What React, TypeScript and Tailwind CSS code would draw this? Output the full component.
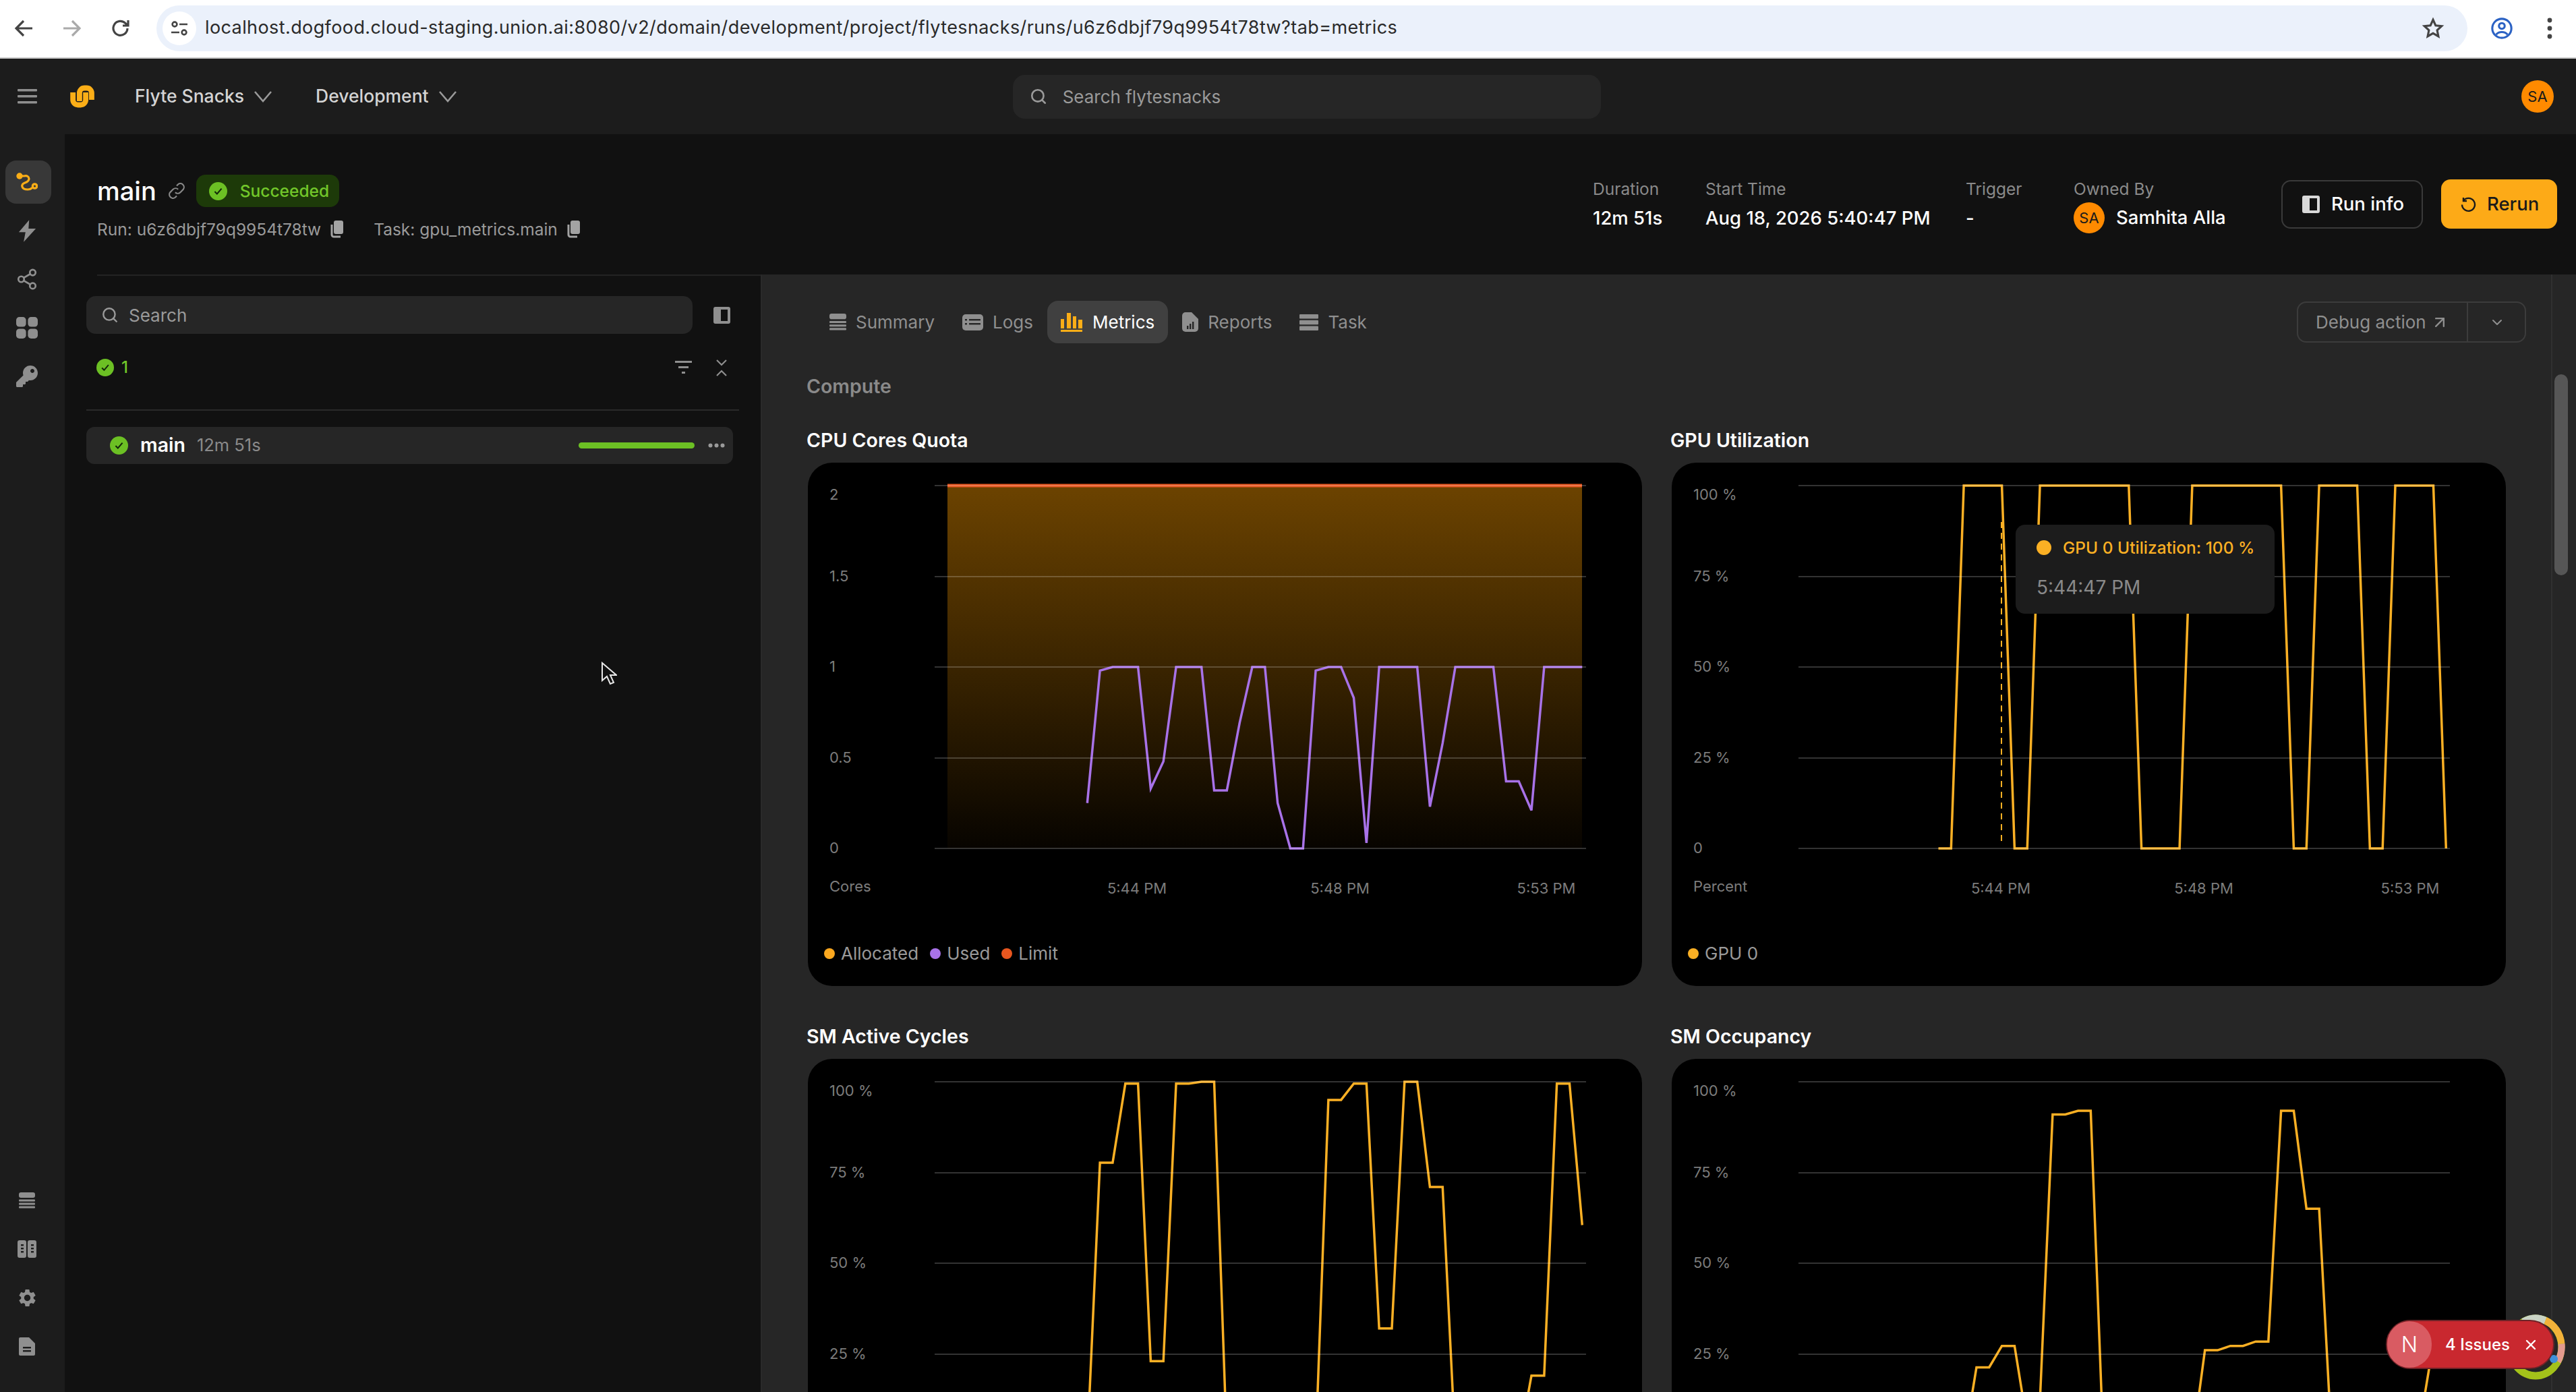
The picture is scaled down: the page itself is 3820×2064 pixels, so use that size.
import { ArrowUpRight, ChevronDown, Search, Share2, X } from "lucide-react";
import { FaKey } from "react-icons/fa";
import { MdSettings } from "react-icons/md";

const CheckCircle = ({ size = 27 }: { size?: number }) => (
  <svg width={size} height={size} viewBox="0 0 24 24" className="shrink-0">
    <circle cx="12" cy="12" r="12" fill="#6cc024" />
    <path d="M7.5 12.5l3 3 6-7" fill="none" stroke="#12260a" strokeWidth="1.8" />
  </svg>
);

const CopyIcon = () => (
  <svg width="20" height="26" viewBox="0 0 20 26" className="shrink-0" fill="#a3a3a3">
    <rect x="6" y="0" width="14" height="20" rx="3" />
    <path d="M3 6v15a3 3 0 0 0 3 3h10" fill="none" stroke="#a3a3a3" strokeWidth="3" />
  </svg>
);

const NavChevron = () => (
  <svg width="28" height="18" viewBox="0 0 28 18" fill="none" stroke="#9a9a9a" strokeWidth="2.6" className="ml-[14px]">
    <path d="M2 2l12 14L26 2" />
  </svg>
);

const RouteIcon = () => (
  <svg width="32" height="28" viewBox="0 0 32 28" fill="none" stroke="#fbae17" strokeWidth="3.2">
    <circle cx="5" cy="5" r="4.7" fill="#fbae17" stroke="none" />
    <path d="M5 5h7c4-1 7 1 7 4s-3 5-6 6c-3 1-5 3-4 6s4 4 8 4c3 0 5-1 6-2" strokeLinecap="round" />
    <circle cx="27.500" cy="20" r="3.200" />
  </svg>
);

const BoltIcon = () => (
  <svg width="27" height="33" viewBox="0 0 30 36" fill="#8f8f8f">
    <path d="M18 0L1 20h11L9 36l20-22H17z" />
  </svg>
);

const TilesIcon = () => (
  <svg width="32" height="32" viewBox="0 0 34 34" fill="#8f8f8f">
    <rect x="0" y="0" width="15.5" height="15.5" rx="5" />
    <rect x="18.5" y="0" width="15.5" height="15.5" rx="5" />
    <rect x="0" y="18.5" width="15.5" height="15.5" rx="5" />
    <rect x="18.5" y="18.5" width="15.5" height="15.5" rx="5" />
  </svg>
);

const RowsIcon = ({ color = "#8f8f8f", w = 24 }: { color?: string; w?: number }) => (
  <svg width={w} height={w} viewBox="0 0 24 24" fill={color}>
    <rect x="0" y="0" width="24" height="8" rx="3" />
    <rect x="0" y="10.5" width="24" height="3" rx="1" />
    <rect x="0" y="15.5" width="24" height="3" rx="1" />
    <rect x="0" y="20.5" width="24" height="3" rx="1" />
  </svg>
);

const ColumnsIcon = () => (
  <svg width="28" height="26" viewBox="0 0 28 26" fill="#8f8f8f">
    <rect x="0" y="0" width="13" height="26" rx="3" />
    <rect x="15" y="0" width="13" height="26" rx="3" />
    <g fill="#1c1c1c">
      <rect x="5" y="6" width="4" height="2.4" />
      <rect x="5" y="11" width="4" height="2.4" />
      <rect x="5" y="16" width="4" height="2.4" />
      <rect x="20" y="6" width="4" height="2.4" />
      <rect x="20" y="11" width="4" height="2.4" />
      <rect x="20" y="16" width="4" height="2.4" />
    </g>
  </svg>
);

const DocLinesIcon = () => (
  <svg width="24" height="27" viewBox="0 0 24 27">
    <path d="M2 0h13l9 9v16a2 2 0 0 1-2 2H2a2 2 0 0 1-2-2V2a2 2 0 0 1 2-2z" fill="#8f8f8f" />
    <rect x="6" y="14" width="12" height="2.4" fill="#1c1c1c" />
    <rect x="6" y="19" width="12" height="2.4" fill="#1c1c1c" />
  </svg>
);

const LogsIcon = () => (
  <svg width="31" height="24" viewBox="0 0 31 24">
    <rect width="31" height="24" rx="5" fill="#8f8f8f" />
    <g fill="#262626">
      <rect x="4" y="7" width="3" height="2.4" />
      <rect x="10" y="7" width="17" height="2.4" />
      <rect x="4" y="13" width="3" height="2.4" />
      <rect x="10" y="13" width="17" height="2.4" />
    </g>
  </svg>
);

const BarsIcon = () => (
  <svg width="32" height="28" viewBox="0 0 32 28" fill="#fbae17">
    <rect x="0" y="9" width="5" height="14" />
    <rect x="9" y="0" width="6" height="23" />
    <rect x="18" y="5" width="5" height="18" />
    <rect x="26" y="10" width="6" height="13" />
    <rect x="0" y="25" width="32" height="3" />
  </svg>
);

const ReportIcon = () => (
  <svg width="24" height="29" viewBox="0 0 24 29">
    <path d="M5 0h9l10 10v14a5 5 0 0 1-5 5H5a5 5 0 0 1-5-5V5a5 5 0 0 1 5-5z" fill="#8f8f8f" />
    <g fill="#262626">
      <rect x="7" y="20" width="2.4" height="5" />
      <rect x="11" y="17" width="2.4" height="8" />
      <rect x="15" y="14" width="2.4" height="11" />
    </g>
  </svg>
);

const ServerIcon = () => (
  <svg width="28" height="24" viewBox="0 0 28 24" fill="#8f8f8f">
    <rect y="0" width="28" height="6.6" rx="1" />
    <rect y="8.7" width="28" height="6.6" rx="1" />
    <rect y="17.4" width="28" height="6.6" rx="1" />
  </svg>
);

const tabs = [
  { label: "Summary", icon: <RowsIcon w={25} />, active: false },
  { label: "Logs", icon: <LogsIcon />, active: false },
  { label: "Metrics", icon: <BarsIcon />, active: true },
  { label: "Reports", icon: <ReportIcon />, active: false },
  { label: "Task", icon: <ServerIcon />, active: false },
];

const repeat = (v: number, n: number) => Array.from({ length: n }, () => v);

const cpuUsed = [
  0.25, 0.98, 1, 1, 1, 0.33, 0.48, 1, 1, 1, 0.32, 0.32, 0.69, 1, 1, 0.25, 0, 0, 0.98, 1, 1, 0.83, 0.03, 1, 1, 1, 1,
  0.23, 0.58, 1, 1, 1, 1, 0.37, 0.37, 0.21, 1, 1, 1, 1,
];
const gpuUtil = [
  0, 0, ...repeat(100, 4), 0, 0, ...repeat(100, 8), ...repeat(0, 4), ...repeat(100, 8), 0, 0, ...repeat(100, 4), 0, 0,
  ...repeat(100, 4), 0,
];
const smActive = [
  0, 77.7, 77.7, 99.5, 99.5, 23, 23, 99.5, 99.5, 100, 100, ...repeat(0, 8), 95, 95, 99.5, 99.5, 32, 32, 100, 100, 71,
  71, ...repeat(0, 6), 19, 19, 99.5, 99.5, 60.5,
];
const smOccupancy = [
  0, 21.3, 21.3, 27.2, 27.2, 5.6, 12, 91, 91, 92, 92, ...repeat(0, 8), 26, 26, 27.2, 27.2, 28.4, 28.4, 92, 92, 65, 65,
  ...repeat(0, 7), 7, 28, 28,
];

const toPoints = (vals: number[], max: number, start: number) =>
  vals.map((v, i) => `${395.5 + (i + start) * 18.82},${572 - (v / max) * 538}`).join(" ");

const gridY = [34, 169, 303, 438, 572];
const tickY = [49, 170, 304, 439, 573];

type Legend = { label: string; color: string };

const Chart = ({
  title,
  ticks,
  unit,
  legend,
  children,
}: {
  title: string;
  ticks: string[];
  unit?: string;
  legend?: Legend[];
  children: React.ReactNode;
}) => (
  <div>
    <div className="-ml-[2px] h-[34px] text-[28.500px] font-semibold leading-[34px] text-white">{title}</div>
    <div className="mt-4 h-[776px] rounded-[36px] bg-black">
      <svg width="1237" height="680" viewBox="0 0 1237 680" className="block">
        <defs>
          <linearGradient id="allocFill" x1="0" y1="0" x2="0" y2="1">
            <stop offset="0" stopColor="#6c4300" />
            <stop offset="0.5" stopColor="#3a2400" />
            <stop offset="1" stopColor="#070400" />
          </linearGradient>
        </defs>
        {children}
        {gridY.map((y) => (
          <line key={y} x1="188" x2="1154" y1={y} y2={y} stroke="#ffffff" strokeOpacity="0.2" strokeWidth="2" />
        ))}
        {ticks.map((t, i) => (
          <text key={t} x="32" y={tickY[i]} dominantBaseline="middle" fill="#7c7c7c" fontSize="22">
            {t}
          </text>
        ))}
        {unit && (
          <>
            <text x="32" y="630" dominantBaseline="middle" fill="#7c7c7c" fontSize="22">
              {unit}
            </text>
            <text x="488" y="633" textAnchor="middle" dominantBaseline="middle" fill="#7c7c7c" fontSize="22">
              5:44 PM
            </text>
            <text x="789" y="633" textAnchor="middle" dominantBaseline="middle" fill="#7c7c7c" fontSize="22">
              5:48 PM
            </text>
            <text x="1095" y="633" textAnchor="middle" dominantBaseline="middle" fill="#7c7c7c" fontSize="22">
              5:53 PM
            </text>
          </>
        )}
      </svg>
      {legend && (
        <div className="mt-[33px] flex items-center gap-[17px] pl-6 text-[26px] leading-[30px] text-[#9a9a9a]">
          {legend.map((l) => (
            <div key={l.label} className="flex items-center gap-[9px]">
              <svg width="16" height="16" viewBox="0 0 16 16">
                <circle cx="8" cy="8" r="8" fill={l.color} />
              </svg>
              {l.label}
            </div>
          ))}
        </div>
      )}
    </div>
  </div>
);

const pctTicks = ["100 %", "75 %", "50 %", "25 %", "0"];

const Stat = ({ label, value, width }: { label: string; value: string; width: string }) => (
  <div className={width}>
    <div className="h-[30px] text-[24.500px] leading-[30px] text-[#8a8a8a]">{label}</div>
    <div className="mt-1 h-[48px] text-[27.500px] font-medium leading-[48px] text-white">{value}</div>
  </div>
);

export default function App() {
  return (
    <div className="relative flex h-[2064px] w-[3820px] flex-col overflow-hidden bg-[#111111] font-['Inter',sans-serif]">
      {/* browser chrome */}
      <div className="flex h-[87px] shrink-0 items-center border-b-2 border-[#c9c9c9] bg-white pb-[2px]">
        <svg width="28" height="26" viewBox="0 0 28 26" fill="none" stroke="#444" strokeWidth="3.2" className="ml-[21px]">
          <path d="M14 2L3 13l11 11M3 13h24" />
        </svg>
        <svg width="28" height="26" viewBox="0 0 28 26" fill="none" stroke="#aaa" strokeWidth="3.2" className="ml-[44px]">
          <path d="M14 2l11 11-11 11M25 13H1" />
        </svg>
        <svg width="28" height="28" viewBox="0 0 28 28" fill="none" stroke="#444" strokeWidth="3.2" className="ml-[44px]">
          <path d="M24 14a10.5 10.5 0 1 1-3-7.5L25 10M25 2v8h-8" />
        </svg>
        <div className="ml-[39px] flex h-[68px] w-[3427px] items-center rounded-full bg-[#ebf1fb] pl-[9px] pr-[34px]">
          <div className="flex h-[50px] w-[50px] items-center justify-center rounded-full bg-white">
            <svg width="26" height="24" viewBox="0 0 26 24" fill="none" stroke="#444" strokeWidth="2.6">
              <circle cx="6" cy="6" r="3.4" />
              <path d="M13 6h12M1 18h12" />
              <circle cx="20" cy="18" r="3.4" />
            </svg>
          </div>
          <span className="ml-[13px] text-[27px] tracking-[0.4px] text-[#2a2a2a]">
            localhost.dogfood.cloud-staging.union.ai:8080/v2/domain/development/project/flytesnacks/runs/u6z6dbjf79q9954t78tw?tab=metrics
          </span>
          <svg width="34" height="34" viewBox="0 0 24 24" fill="none" stroke="#444" strokeWidth="2.2" className="ml-auto">
            <path d="M12 3l2.7 6 6.3.7-4.7 4.3 1.3 6.4L12 17.2l-5.6 3.2 1.3-6.4L3 9.7 9.300 9z" />
          </svg>
        </div>
        <svg width="34" height="34" viewBox="0 0 24 24" fill="none" stroke="#2b62c4" strokeWidth="2.2" className="ml-[34px]">
          <circle cx="12" cy="12" r="10" />
          <circle cx="12" cy="9.500" r="3" />
          <path d="M6 18.500c3-3.500 9-3.500 12 0" />
        </svg>
        <svg width="8" height="32" viewBox="0 0 8 32" fill="#444" className="ml-[50px]">
          <circle cx="4" cy="4" r="3.400" />
          <circle cx="4" cy="16" r="3.400" />
          <circle cx="4" cy="28" r="3.400" />
        </svg>
      </div>

      {/* top nav */}
      <div className="flex h-[112px] shrink-0 items-center bg-[#1c1c1c] text-[26.500px] font-medium text-[#d4d4d4]">
        <svg width="29" height="22" viewBox="0 0 29 22" fill="#8f8f8f" className="ml-[26px]">
          <rect width="29" height="3.600" rx="1" />
          <rect y="9" width="29" height="3.600" rx="1" />
          <rect y="18" width="29" height="3.600" rx="1" />
        </svg>
        <svg width="37" height="36" viewBox="13 12 40 37" fill="none" stroke="#fbae17" strokeWidth="8.500" className="ml-[49px]">
          <path d="M28 38V25a8 8 0 0 1 8-8h3.500a8 8 0 0 1 8 8v11" />
          <path d="M17.500 24v12a8 8 0 0 0 8 8h4.500a8 8 0 0 0 8-8V24" />
        </svg>
        <span className="ml-[59px]">Flyte Snacks</span>
        <NavChevron />
        <span className="ml-[64px]">Development</span>
        <NavChevron />
        <div className="ml-[824px] flex h-[65px] w-[872px] items-center rounded-[18px] bg-[#262626] pl-[25px] font-normal text-[#9a9a9a]">
          <Search className="h-[26px] w-[26px] text-[#9a9a9a]" strokeWidth={2.4} />
          <span className="ml-[23px] text-[26px]">Search flytesnacks</span>
        </div>
        <div className="ml-auto mr-[33px] flex h-[48px] w-[48px] items-center justify-center rounded-full bg-[#ff8a00] text-[22px] font-normal text-[#1a1a1a]">
          SA
        </div>
      </div>

      <div className="flex min-h-0 flex-1">
        {/* icon rail */}
        <div className="flex w-[96px] shrink-0 flex-col justify-between bg-[#1c1c1c] pb-[32px] pr-[16px] pt-[35px]">
          <div>
            <div className="flex h-[72px] items-center justify-center">
              <div className="ml-[4px] flex h-[64px] w-[68px] shrink-0 items-center justify-center rounded-[16px] bg-[#383838] pr-[4px]">
                <RouteIcon />
              </div>
            </div>
            <div className="flex h-[72px] items-center justify-center">
              <BoltIcon />
            </div>
            <div className="flex h-[72px] items-center justify-center">
              <Share2 className="h-[34px] w-[34px] text-[#8f8f8f]" strokeWidth={1.9} />
            </div>
            <div className="flex h-[72px] items-center justify-center">
              <TilesIcon />
            </div>
            <div className="flex h-[72px] items-center justify-center">
              <FaKey className="h-[32px] w-[32px] text-[#8f8f8f]" />
            </div>
          </div>
          <div>
            <div className="flex h-[72px] items-center justify-center">
              <RowsIcon />
            </div>
            <div className="flex h-[72px] items-center justify-center">
              <ColumnsIcon />
            </div>
            <div className="flex h-[72px] items-center justify-center">
              <MdSettings className="h-[31px] w-[31px] text-[#8f8f8f]" />
            </div>
            <div className="flex h-[72px] items-center justify-center">
              <DocLinesIcon />
            </div>
          </div>
        </div>

        <div className="flex min-w-0 flex-1 flex-col">
          {/* run header */}
          <div className="flex h-[208px] shrink-0 bg-[#111111]">
            <div className="pl-[48px] pt-[60px]">
              <div className="flex h-[48px] items-center">
                <span className="text-[38px] font-medium text-white">main</span>
                <svg width="26" height="26" viewBox="0 0 24 24" fill="none" stroke="#8a8a8a" strokeWidth="2" className="ml-[17px]">
                  <path d="M10 14a5 5 0 0 0 7 0l4-4a5 5 0 0 0-7-7l-2 2" />
                  <path d="M14 10a5 5 0 0 0-7 0l-4 4a5 5 0 0 0 7 7l2-2" />
                </svg>
                <div className="ml-[16px] flex h-[48px] w-[212px] items-center rounded-[14px] bg-[#1d3a09] pl-[19px] text-[24.500px] font-medium text-[#72c72a]">
                  <CheckCircle />
                  <span className="ml-[19px]">Succeeded</span>
                </div>
              </div>
              <div className="mt-[17px] flex h-[32px] items-center text-[24.500px] text-[#9a9a9a]">
                <span>Run: u6z6dbjf79q9954t78tw</span>
                <span className="ml-[13px]">
                  <CopyIcon />
                </span>
                <span className="ml-[45px]">Task: gpu_metrics.main</span>
                <span className="ml-[13px]">
                  <CopyIcon />
                </span>
              </div>
            </div>
            <div className="ml-auto flex pt-[66px]">
              <Stat label="Duration" value="12m 51s" width="w-[167px]" />
              <Stat label="Start Time" value="Aug 18, 2026 5:40:47 PM" width="w-[386px]" />
              <Stat label="Trigger" value="-" width="w-[160px]" />
              <div className="w-[308px]">
                <div className="h-[30px] text-[24.500px] leading-[30px] text-[#8a8a8a]">Owned By</div>
                <div className="mt-1 flex h-[48px] items-center text-[27.500px] font-medium text-white">
                  <div className="flex h-[46px] w-[46px] items-center justify-center rounded-full bg-[#ff8a00] text-[22px] font-normal text-[#1a1a1a]">
                    SA
                  </div>
                  <span className="ml-[17px]">Samhita Alla</span>
                </div>
              </div>
              <div className="mt-[2px] flex h-[72px] w-[210px] items-center rounded-[14px] border-2 border-[#3a3a3a] pl-[29px] text-[27.500px] font-medium text-white">
                <svg width="26" height="26" viewBox="0 0 26 26">
                  <rect width="26" height="26" rx="3" fill="#d8d8d8" />
                  <rect x="11" y="4" width="11" height="18" fill="#111111" />
                </svg>
                <span className="ml-[17px]">Run info</span>
              </div>
              <div className="ml-[27px] mr-[28px] mt-[1px] flex h-[73px] w-[172px] items-center rounded-[14px] bg-[#fdaa17] pl-[28px] text-[27.500px] font-medium text-[#1a1a1a]">
                <svg width="24" height="26" viewBox="0 0 24 24" fill="none" stroke="#1a1a1a" strokeWidth="2.400">
                  <path d="M5 6.500a9.500 9.500 0 1 1-2 6" />
                  <path d="M5 2v5h5" />
                </svg>
                <span className="ml-[16px]">Rerun</span>
              </div>
            </div>
          </div>

          <div className="flex min-h-0 flex-1">
            {/* left panel */}
            <div className="w-[1034px] shrink-0 border-r-2 border-[#2a2a2a] bg-[#111111]">
              <div className="ml-[48px] h-[2px] bg-[#232323]" />
              <div className="ml-[32px] mt-[30px] flex items-center">
                <div className="flex h-[56px] w-[899px] items-center rounded-[14px] bg-[#262626] pl-[22px] text-[26px] text-[#9a9a9a]">
                  <Search className="h-[26px] w-[26px] text-[#9a9a9a]" strokeWidth={2.2} />
                  <span className="ml-[15px]">Search</span>
                </div>
                <svg width="25" height="25" viewBox="0 0 25 25" className="ml-[31px]">
                  <rect width="25" height="25" rx="3" fill="#8f8f8f" />
                  <rect x="11" y="4" width="10" height="17" fill="#111111" />
                </svg>
              </div>
              <div className="ml-[47px] mr-[49px] mt-[28px] flex h-[44px] items-center">
                <CheckCircle size={26} />
                <span className="ml-[11px] text-[24px] font-medium text-[#72c72a]">1</span>
                <svg width="25" height="20" viewBox="0 0 25 20" fill="#8f8f8f" className="ml-auto">
                  <rect width="25" height="3" />
                  <rect x="5" y="8" width="15" height="3" />
                  <rect x="10" y="16" width="5" height="3" />
                </svg>
                <svg width="18" height="27" viewBox="0 0 18 27" fill="none" stroke="#8f8f8f" strokeWidth="2.2" className="ml-[35px]">
                  <path d="M2 2l7 7 7-7M2 25l7-7 7 7" />
                </svg>
              </div>
              <div className="mx-[32px] mt-[40px] h-[2px] bg-[#2a2a2a]" />
              <div className="ml-[32px] mr-[41px] mt-[24px] flex h-[55px] items-center rounded-[12px] bg-[#262626] pl-[35px] pr-[12px]">
                <CheckCircle />
                <span className="ml-[18px] text-[28.500px] font-semibold text-white">main</span>
                <span className="ml-[17px] text-[25.500px] text-[#8a8a8a]">12m 51s</span>
                <div className="ml-auto h-[9px] w-[172px] rounded-full bg-[#6cc024]" />
                <svg width="25" height="7" viewBox="0 0 25 7" fill="#9a9a9a" className="ml-[20px]">
                  <circle cx="3.500" cy="3.500" r="3" />
                  <circle cx="12.500" cy="3.500" r="3" />
                  <circle cx="21.500" cy="3.500" r="3" />
                </svg>
              </div>
            </div>

            {/* metrics panel */}
            <div className="flex min-w-0 flex-1 bg-[#262626]">
              <div className="min-w-0 flex-1 pl-[68px] pr-[37px]">
                <div className="mt-[39px] flex h-[63px] items-center pl-[12px]">
                  <div className="flex gap-[1px]">
                    {tabs.map((t) => (
                      <div
                        key={t.label}
                        className={
                          t.active
                            ? "flex h-[63px] items-center gap-[15px] rounded-[16px] bg-[#404040] px-[20px] text-[26px] text-white"
                            : "flex h-[63px] items-center gap-[14px] rounded-[16px] px-[20px] text-[26px] text-[#8f8f8f]"
                        }
                      >
                        {t.icon}
                        {t.label}
                      </div>
                    ))}
                  </div>
                  <div className="ml-auto flex h-[61px] w-[340px] items-center rounded-[14px] border-2 border-[#3c3c3c] text-[26px] text-[#8f8f8f]">
                    <div className="flex h-full w-[252px] items-center border-r-2 border-[#3c3c3c] pl-[26px]">
                      Debug action
                      <ArrowUpRight className="ml-[6px] h-[28px] w-[28px]" strokeWidth={2} />
                    </div>
                    <ChevronDown className="ml-[31px] h-[24px] w-[24px]" strokeWidth={2} />
                  </div>
                </div>
                <div className="-ml-[2px] mt-[44px] h-[40px] text-[28.500px] font-semibold leading-[40px] text-[#8a8a8a]">Compute</div>
                <div className="mr-[30px] mt-[43px] grid grid-cols-2 gap-x-[44px] gap-y-[58px]">
                  <Chart
                    title="CPU Cores Quota"
                    ticks={["2", "1.5", "1", "0.5", "0"]}
                    unit="Cores"
                    legend={[
                      { label: "Allocated", color: "#fba81f" },
                      { label: "Used", color: "#a872e8" },
                      { label: "Limit", color: "#e8561f" },
                    ]}
                  >
                    <rect x="207" y="34" width="941" height="538" fill="url(#allocFill)" />
                    <line x1="207" x2="1148" y1="34" y2="34" stroke="#e8561f" strokeWidth="5" />
                    <polyline points={toPoints(cpuUsed, 2, 1)} fill="none" stroke="#a872e8" strokeWidth="3.500" />
                  </Chart>
                  <div className="relative">
                    <Chart
                      title="GPU Utilization"
                      ticks={pctTicks}
                      unit="Percent"
                      legend={[{ label: "GPU 0", color: "#fbb024" }]}
                    >
                      <polyline points={toPoints(gpuUtil, 100, 0)} fill="none" stroke="#fbb024" strokeWidth="3.500" />
                      <line x1="489" x2="489" y1="88" y2="564" stroke="#fbb024" strokeWidth="2" strokeDasharray="9 7" />
                    </Chart>
                    <div className="absolute left-[510px] top-[142px] h-[132px] w-[384px] rounded-[14px] bg-[#1c1c1c] pl-[31px] pt-[16px]">
                      <div className="flex items-center text-[24.500px] font-medium text-[#fbb024]">
                        <svg width="22" height="22" viewBox="0 0 22 22">
                          <circle cx="11" cy="11" r="11" fill="#fbb024" />
                        </svg>
                        <span className="ml-[17px]">GPU 0 Utilization: 100 %</span>
                      </div>
                      <div className="mt-[19px] text-[28px] text-[#8a8a8a]">5:44:47 PM</div>
                    </div>
                  </div>
                  <Chart title="SM Active Cycles" ticks={pctTicks.slice(0, 4)}>
                    <polyline points={toPoints(smActive, 100, 1)} fill="none" stroke="#fbb024" strokeWidth="3.500" />
                  </Chart>
                  <Chart title="SM Occupancy" ticks={pctTicks.slice(0, 4)}>
                    <polyline points={toPoints(smOccupancy, 100, 2)} fill="none" stroke="#fbb024" strokeWidth="3.500" />
                  </Chart>
                </div>
              </div>
              {/* scrollbar */}
              <div className="w-[37px] shrink-0 border-l-2 border-[#303030] pl-[3px] pt-[148px]">
                <div className="h-[298px] w-[20px] rounded-full bg-[#565656]" />
              </div>
            </div>
          </div>
        </div>
      </div>

      {/* mouse pointer */}
      <svg width="24" height="36" viewBox="0 0 24 36" className="absolute left-[891px] top-[981px]">
        <path d="M2 2v26l7-6 5 11 5-2-5-11h9z" fill="#111" stroke="#e8e8e8" strokeWidth="2" />
      </svg>

      {/* dev overlay */}
      <div className="absolute left-[3716px] top-[1949px]">
        <svg width="88" height="97" viewBox="0 0 96 96" preserveAspectRatio="none" fill="none" strokeWidth="11">
          <circle cx="48" cy="48" r="42" stroke="#a4c21a" />
          <path d="M28 11a42 42 0 0 1 36-2" stroke="#c9d3c5" />
          <path d="M64 9a42 42 0 0 1 26 34" stroke="#f2b23a" />
          <path d="M90 43a42 42 0 0 1-6 26" stroke="#e39a8e" />
        </svg>
        <div className="absolute left-[65px] top-[60px] h-[12px] w-[12px] rounded-full bg-[#3f8fd8]" />
      </div>
      <div className="absolute left-[3538px] top-[1957px] flex h-[73px] w-[250px] items-center rounded-full border-2 border-[#6e2227] bg-[#c9282f] text-[24px] font-medium text-white">
        <div className="flex h-[69px] w-[66px] items-center justify-center rounded-full bg-[#d95b62] text-[32px] font-light">N</div>
        <span className="ml-[20px]">4 Issues</span>
        <X className="ml-[19px] h-[24px] w-[24px]" strokeWidth={2.4} />
      </div>
    </div>
  );
}
